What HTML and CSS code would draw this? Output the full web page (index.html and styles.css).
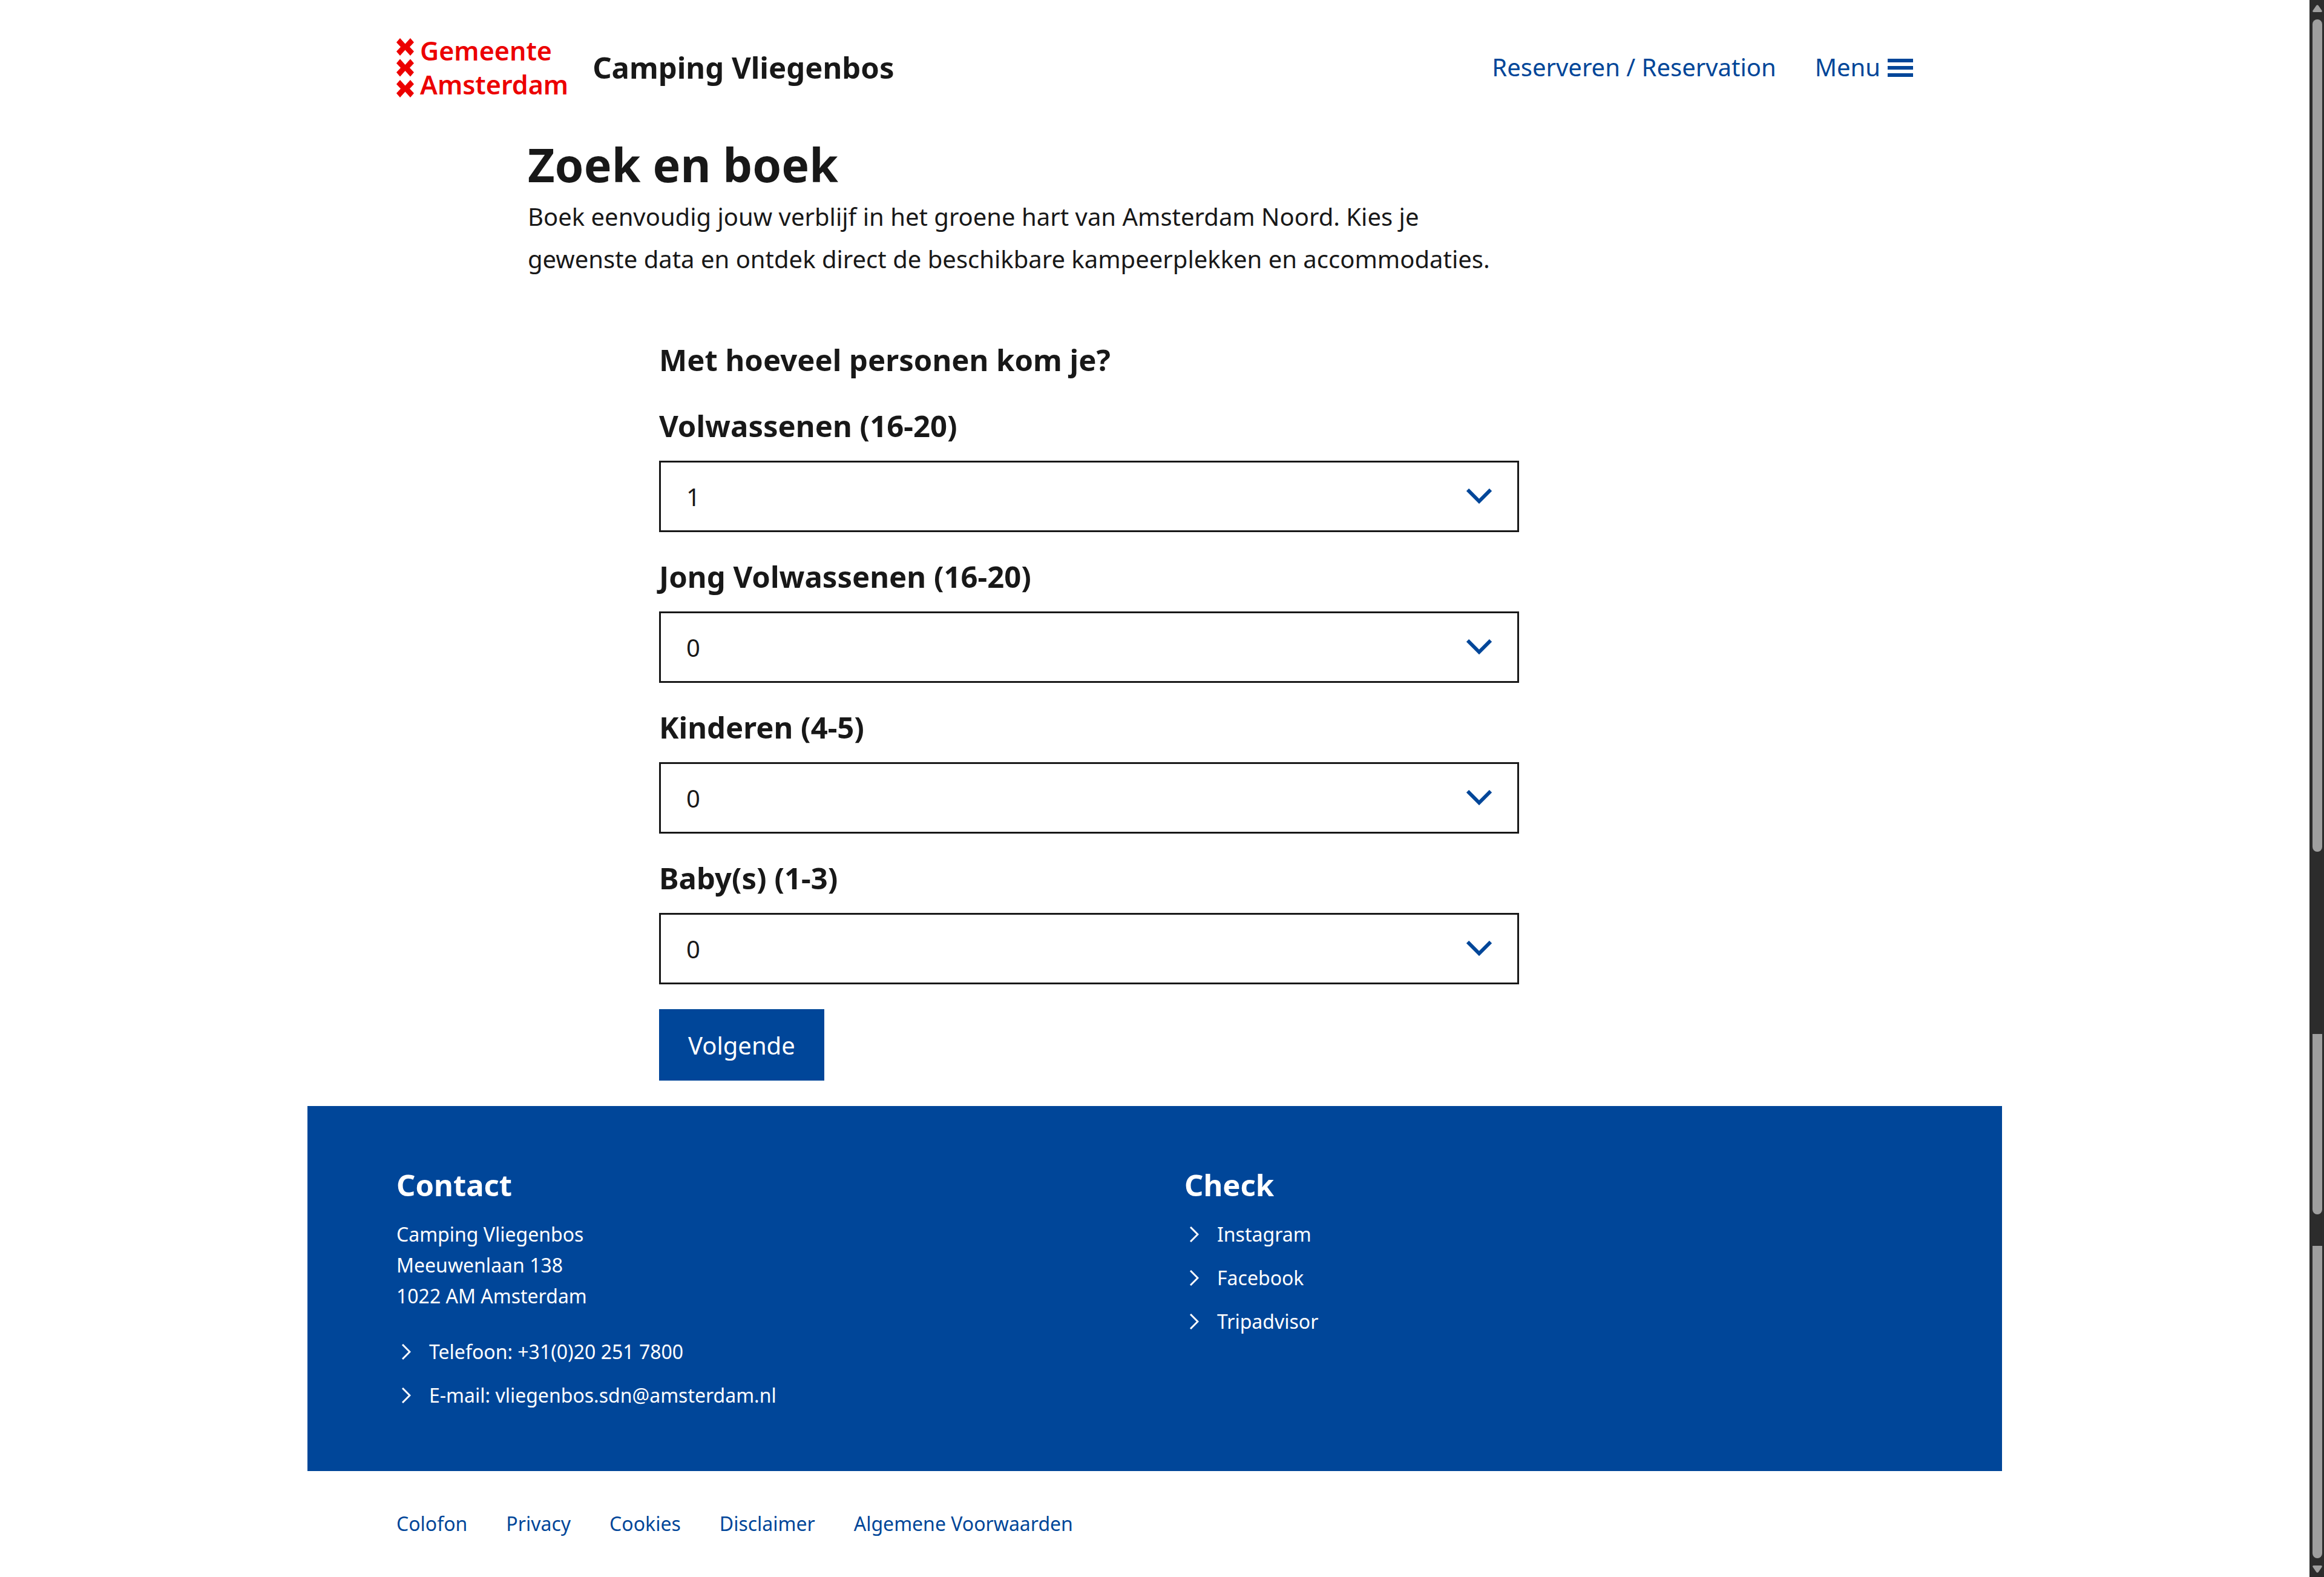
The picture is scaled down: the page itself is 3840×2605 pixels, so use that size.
FILE: index.html
```html
<!DOCTYPE html>
<html lang="nl">
<head>
  <meta charset="utf-8">
  <meta name="viewport" content="width=device-width, initial-scale=1">
  <title>Zoek en boek - Camping Vliegenbos</title>
  <link rel="stylesheet" href="styles.css">
</head>
<body>
  <div class="page">
    <header class="header">
      <a class="logo" href="#">
        <svg class="logo-mark" viewBox="0 0 29 98" aria-hidden="true">
          <defs>
            <path id="cross" d="M6 0 14.500 9.500 23 0 29 7 22 14.500 29 22 23 29 14.500 19.500 6 29 0 22 7 14.500 0 7Z"/>
          </defs>
          <use href="#cross"/>
          <use href="#cross" y="34.500"/>
          <use href="#cross" y="69"/>
        </svg>
        <span class="logo-text">Gemeente<br>Amsterdam</span>
      </a>
      <span class="site-name">Camping Vliegenbos</span>
      <nav class="nav" aria-label="Hoofdnavigatie">
        <a class="nav-link" href="#">Reserveren / Reservation</a>
        <button class="menu-button" type="button">
          Menu
          <svg class="menu-icon" viewBox="0 0 42 32" aria-hidden="true">
            <path d="M0 2h42v6H0zM0 14h42v6H0zM0 26h42v6H0z"/>
          </svg>
        </button>
      </nav>
    </header>

    <main class="grid main">
      <div class="intro">
        <h1 class="title">Zoek en boek</h1>
        <p class="lead">Boek eenvoudig jouw verblijf in het groene hart van Amsterdam Noord. Kies je gewenste data en ontdek direct de beschikbare kampeerplekken en accommodaties.</p>
      </div>

      <form class="form">
        <h2 class="form-title">Met hoeveel personen kom je?</h2>
        <div class="field">
          <label class="label" for="adults">Volwassenen (16-20)</label>
          <div class="select-wrap">
            <select class="select" id="adults"><option>0</option><option selected>1</option><option>2</option></select>
            <svg class="select-icon" viewBox="0 0 42 26" aria-hidden="true"><path d="M2 2 21 21 40 2"/></svg>
          </div>
        </div>
        <div class="field">
          <label class="label" for="youth">Jong Volwassenen (16-20)</label>
          <div class="select-wrap">
            <select class="select" id="youth"><option>0</option><option>1</option><option>2</option></select>
            <svg class="select-icon" viewBox="0 0 42 26" aria-hidden="true"><path d="M2 2 21 21 40 2"/></svg>
          </div>
        </div>
        <div class="field">
          <label class="label" for="children">Kinderen (4-5)</label>
          <div class="select-wrap">
            <select class="select" id="children"><option>0</option><option>1</option><option>2</option></select>
            <svg class="select-icon" viewBox="0 0 42 26" aria-hidden="true"><path d="M2 2 21 21 40 2"/></svg>
          </div>
        </div>
        <div class="field">
          <label class="label" for="babies">Baby(s) (1-3)</label>
          <div class="select-wrap">
            <select class="select" id="babies"><option>0</option><option>1</option><option>2</option></select>
            <svg class="select-icon" viewBox="0 0 42 26" aria-hidden="true"><path d="M2 2 21 21 40 2"/></svg>
          </div>
        </div>
        <button class="button" type="submit">Volgende</button>
      </form>
    </main>

    <footer>
      <div class="grid footer">
        <section class="footer-column">
          <h2 class="footer-title">Contact</h2>
          <address class="address">Camping Vliegenbos<br>Meeuwenlaan 138<br>1022 AM Amsterdam</address>
          <ul class="links">
            <li><a class="footer-link" href="#"><svg class="chevron" viewBox="0 0 15 26" aria-hidden="true"><path d="M1 1 13 13 1 25"/></svg>Telefoon: +31(0)20 251 7800</a></li>
            <li><a class="footer-link" href="#"><svg class="chevron" viewBox="0 0 15 26" aria-hidden="true"><path d="M1 1 13 13 1 25"/></svg>E-mail: vliegenbos.sdn@amsterdam.nl</a></li>
          </ul>
        </section>
        <section class="footer-column">
          <h2 class="footer-title">Check</h2>
          <ul class="links">
            <li><a class="footer-link" href="#"><svg class="chevron" viewBox="0 0 15 26" aria-hidden="true"><path d="M1 1 13 13 1 25"/></svg>Instagram</a></li>
            <li><a class="footer-link" href="#"><svg class="chevron" viewBox="0 0 15 26" aria-hidden="true"><path d="M1 1 13 13 1 25"/></svg>Facebook</a></li>
            <li><a class="footer-link" href="#"><svg class="chevron" viewBox="0 0 15 26" aria-hidden="true"><path d="M1 1 13 13 1 25"/></svg>Tripadvisor</a></li>
          </ul>
        </section>
      </div>
      <nav class="legal" aria-label="Over deze website">
        <a href="#">Colofon</a>
        <a href="#">Privacy</a>
        <a href="#">Cookies</a>
        <a href="#">Disclaimer</a>
        <a href="#">Algemene Voorwaarden</a>
      </nav>
    </footer>
  </div>

  <div class="scrollbar" aria-hidden="true">
    <svg class="scroll-arrow" viewBox="0 0 16 12"><path d="M6 1.500Q8-1 10 1.500L15.500 9.500Q16.500 12 14 12H2Q-.5 12 .5 9.500Z"/></svg>
    <div class="track">
      <div class="thumb thumb-first"></div>
      <div class="thumb thumb-middle"></div>
      <div class="thumb thumb-last"></div>
    </div>
    <svg class="scroll-arrow" viewBox="0 0 16 12"><path d="M6 10.500Q8 13 10 10.500L15.500 2.500Q16.500 0 14 0H2Q-.5 0 .5 2.500Z"/></svg>
  </div>
</body>
</html>
```
FILE: styles.css
```css
:root {
  --blue: #004699;
  --red: #ec0000;
  --ink: #181818;
  --gutter: 147px;
}

* {
  box-sizing: border-box;
  margin: 0;
  padding: 0;
}

body {
  display: grid;
  grid-template-columns: minmax(0, 1fr) 24px;
  min-height: 100vh;
  background: #fff;
  color: var(--ink);
  font-family: "Noto Sans", "Open Sans", sans-serif;
  font-size: 40px;
}

a {
  color: inherit;
  text-decoration: none;
}

ul {
  list-style: none;
}

.page {
  width: 100%;
  max-width: 2800px;
  margin: 0 auto;
}

.grid {
  display: grid;
  grid-template-columns: repeat(12, minmax(0, 1fr));
  column-gap: 98px;
  padding: 0 var(--gutter);
}

/* Header */
.header {
  display: flex;
  align-items: flex-start;
  padding: 56px var(--gutter) 53px;
  line-height: 110px;
}

.logo {
  display: flex;
  align-items: center;
  gap: 10px;
  color: var(--red);
}

.logo-mark {
  width: 29px;
  height: 98px;
  fill: currentColor;
}

.logo-text {
  font-size: 43px;
  font-weight: 600;
  line-height: 56px;
}

.site-name {
  margin-left: 40px;
  font-size: 49px;
  font-weight: 700;
}

.nav {
  display: flex;
  gap: 64px;
  margin-left: auto;
  color: var(--blue);
}

.menu-button {
  display: flex;
  align-items: center;
  gap: 12px;
  border: 0;
  background: none;
  color: inherit;
  font: inherit;
}

.menu-icon {
  width: 42px;
  height: 32px;
  fill: currentColor;
}

/* Intro */
.intro {
  grid-column: 2 / span 8;
}

.title {
  font-size: 77px;
  line-height: 102px;
}

.lead {
  line-height: 70px;
}

/* Form */
.form {
  grid-column: 3 / span 7;
  display: flex;
  flex-direction: column;
  align-items: stretch;
  gap: 41px;
  padding: 95px 0 42px;
}

.form-title {
  font-size: 49px;
  line-height: 72px;
}

.field {
  display: flex;
  flex-direction: column;
  gap: 26px;
}

.label {
  font-size: 49px;
  font-weight: 700;
  line-height: 64px;
}

.select-wrap {
  display: grid;
  align-items: center;
}

.select,
.select-icon {
  grid-area: 1 / 1;
}

.select {
  width: 100%;
  height: 118px;
  padding: 0 42px;
  border: 3px solid var(--ink);
  border-radius: 0;
  appearance: none;
  background: #fff;
  color: inherit;
  font: inherit;
}

.select-icon {
  justify-self: end;
  width: 42px;
  height: 26px;
  margin-right: 45px;
  fill: none;
  stroke: var(--blue);
  stroke-width: 6;
  pointer-events: none;
}

.button {
  align-self: flex-start;
  height: 118px;
  padding: 0 48px;
  border: 0;
  background: var(--blue);
  color: #fff;
  font: inherit;
}

/* Footer */
.footer {
  padding-top: 98px;
  padding-bottom: 100px;
  background: var(--blue);
  color: #fff;
  font-size: 32px;
  line-height: 51px;
}

.footer-column {
  grid-column: span 6;
}

.footer-title {
  margin-bottom: 24px;
  font-size: 49px;
  line-height: 64px;
}

.address {
  margin-bottom: 41px;
  font-style: normal;
}

.links {
  display: grid;
  gap: 21px;
}

.footer-link {
  display: flex;
  align-items: center;
  gap: 30px;
  padding-left: 9px;
}

.chevron {
  width: 15px;
  height: 26px;
  fill: none;
  stroke: currentColor;
  stroke-width: 3;
}

.legal {
  display: flex;
  flex-wrap: wrap;
  gap: 64px;
  padding: 61px var(--gutter) 56px;
  color: var(--blue);
  font-size: 32px;
  line-height: 51px;
}

/* Scroll bar */
.scrollbar {
  display: flex;
  flex-direction: column;
  gap: 12px;
  padding: 8px 3px 7px 5px;
  background: #2c2c2c;
}

.scroll-arrow {
  width: 16px;
  height: 12px;
  fill: #9f9f9f;
}

.track {
  flex: 1;
  display: grid;
  grid-template-rows: 1375fr 301fr 298fr 52fr 516fr;
}

.thumb {
  border-radius: 0 0 8px 8px;
  background: #9f9f9f;
}

.thumb-first {
  grid-row: 1;
  border-radius: 8px;
}

.thumb-middle {
  grid-row: 3;
}

.thumb-last {
  grid-row: 5;
}
```
